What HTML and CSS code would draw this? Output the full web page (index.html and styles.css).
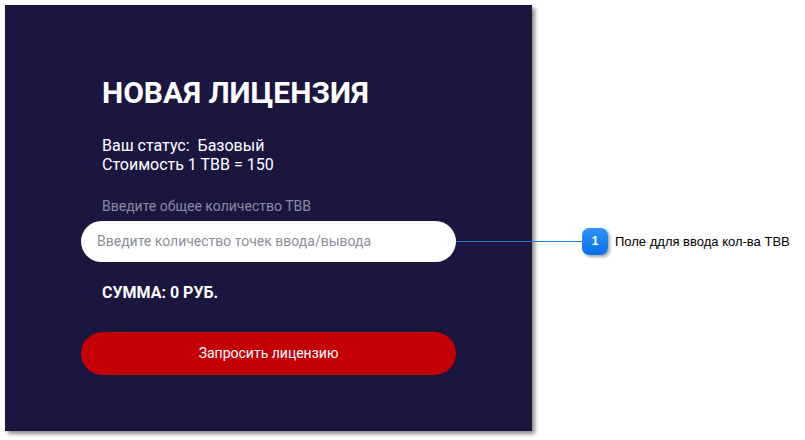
FILE: index.html
```html
<!DOCTYPE html>
<html lang="ru">
<head>
<meta charset="utf-8">
<link rel="stylesheet" href="styles.css">
</head>
<body>
<div class="stage">
  <div class="panel">
    <h1 class="title">НОВАЯ ЛИЦЕНЗИЯ</h1>
    <div class="status">
      <div>Ваш статус:&nbsp; Базовый</div>
      <div>Стоимость 1 ТВВ = 150</div>
    </div>
    <div class="label">Введите общее количество ТВВ</div>
    <div class="input">Введите количество точек ввода/вывода</div>
    <div class="sum">СУММА: 0 РУБ.</div>
    <div class="button">Запросить лицензию</div>
  </div>
  <div class="callout">
    <div class="callout-line"></div>
    <div class="badge">1</div>
    <div class="callout-text">Поле ддля ввода кол-ва ТВВ</div>
  </div>
</div>
</body>
</html>
```
FILE: styles.css
```css
html, body {
  margin: 0;
  padding: 0;
  background: #ffffff;
}
.stage {
  position: relative;
  width: 805px;
  height: 440px;
  overflow: hidden;
}
.panel {
  box-sizing: border-box;
  width: 527px;
  height: 426px;
  margin: 5px 0 0 5px;
  padding-left: 76px;
  background: #1b1640;
  box-shadow: 3px 3px 4px rgba(0, 0, 0, 0.45);
  font-family: Roboto, "Liberation Sans", sans-serif;
  color: #ffffff;
  display: flex;
  flex-direction: column;
  align-items: flex-start;
}
.title {
  margin: 70px 0 0 21px;
  font-size: 30px;
  line-height: 35px;
  font-weight: 700;
}
.status {
  margin: 26px 0 0 21px;
  font-size: 16px;
  line-height: 19px;
}
.label {
  margin: 24px 0 0 21px;
  font-size: 14px;
  line-height: 17px;
  color: #8b8aa6;
}
.input {
  box-sizing: border-box;
  margin-top: 6px;
  width: 375px;
  height: 41px;
  border-radius: 21px;
  background: #ffffff;
  color: #8e8e98;
  font-size: 14px;
  line-height: 41px;
  padding-left: 16px;
}
.sum {
  margin: 21px 0 0 21px;
  font-size: 16px;
  line-height: 19px;
  font-weight: 700;
}
.button {
  margin-top: 30px;
  width: 375px;
  height: 43px;
  border-radius: 22px;
  background: #c40006;
  color: #ffffff;
  font-size: 14px;
  line-height: 43px;
  text-align: center;
}
.callout {
  position: absolute;
  left: 456px;
  top: 228px;
  display: flex;
  align-items: center;
  height: 27px;
}
.callout-line {
  width: 126px;
  height: 1px;
  background: #1e78d8;
}
.badge {
  width: 26px;
  height: 27px;
  border-radius: 7px;
  background: linear-gradient(#2b95ff, #0a6fe6);
  box-shadow: 2px 2px 3px rgba(0, 0, 0, 0.35);
  color: #ffffff;
  font-family: "Liberation Sans", Arial, sans-serif;
  font-weight: 700;
  font-size: 12px;
  line-height: 27px;
  text-align: center;
}
.callout-text {
  margin-left: 7px;
  font-family: "Liberation Sans", Arial, sans-serif;
  font-size: 13px;
  color: #000000;
  white-space: nowrap;
}
```
